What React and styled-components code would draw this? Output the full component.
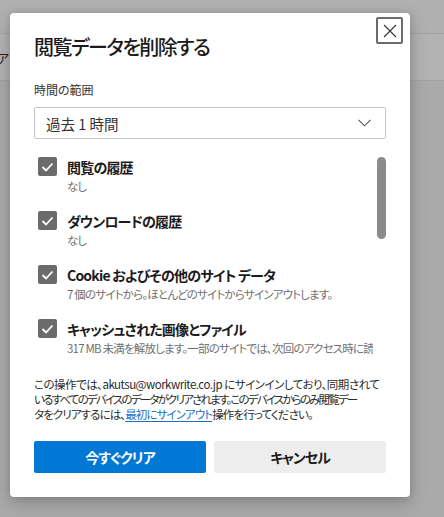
import React from "react";
import styled, { createGlobalStyle } from "styled-components";

const GlobalStyle = createGlobalStyle`
	html, body {
		margin: 0;
		padding: 0;
	}
	body {
		font-family: "Noto Sans CJK JP", "Noto Sans", sans-serif;
		font-feature-settings: "palt";
		color: #1b1b1b;
	}
`;

const Page = styled.div`
	position: relative;
	width: 444px;
	height: 517px;
	overflow: hidden;
	background: #aaaaaa;
`;
const TopStrip = styled.div`
	height: 33px;
	background: #b0b0b0;
`;
const BackBar = styled.div`
	height: 46px;
	display: flex;
	align-items: center;
	background: #b3b3b3;
	border-top: 1px solid #a3a3a3;
	border-bottom: 1px solid #a3a3a3;
	font-size: 13px;
	color: #222;
	margin-left: -3px;
`;

const Dialog = styled.div`
	position: absolute;
	left: 10px;
	top: 13px;
	width: 400px;
	height: 484px;
	box-sizing: border-box;
	background: #ffffff;
	border-radius: 4px;
	box-shadow: 0 6px 18px rgba(0, 0, 0, 0.22), 0 0 6px rgba(0, 0, 0, 0.1);
	padding: 20px 24px 24px 24px;
	display: flex;
	flex-direction: column;
`;
const Close = styled.button`
	position: absolute;
	top: 4px;
	right: 7px;
	width: 27px;
	height: 27px;
	box-sizing: border-box;
	border: 2px solid #6b6b6b;
	border-radius: 2px;
	background: #fff;
	padding: 0;
	display: flex;
	align-items: center;
	justify-content: center;
`;
const Title = styled.h1`
	margin: 0;
	font-size: 20px;
	line-height: 28px;
	font-weight: 500;
	letter-spacing: -1.5px;
	color: #1b1b1b;
`;
const FieldLabel = styled.div`
	margin-top: 20px;
	font-size: 12px;
	line-height: 18px;
	color: #333;
`;
const Select = styled.div`
	margin-top: 8px;
	height: 32px;
	box-sizing: border-box;
	border: 1px solid #c6c6c6;
	border-radius: 2px;
	display: flex;
	align-items: center;
	justify-content: space-between;
	padding: 0 14px 0 11px;
	font-size: 14.5px;
	color: #333;
`;
const ListArea = styled.div`
	margin-top: 6px;
	height: 210px;
	display: flex;
	overflow: hidden;
`;
const List = styled.div`
	flex: 1;
	min-width: 0;
	padding-top: 12px;
`;
const Track = styled.div`
	width: 9px;
	padding-top: 12px;
`;
const Thumb = styled.div`
	height: 82px;
	border-radius: 5px;
	background: #8a8a8a;
`;
const Item = styled.div`
	display: flex;
	align-items: flex-start;
	height: 54px;
	padding-left: 4px;
`;
const Box = styled.span`
	flex: none;
	width: 19px;
	height: 19px;
	border-radius: 2px;
	background: #6b6b6b;
	display: flex;
	align-items: center;
	justify-content: center;
`;
const ItemText = styled.div`
	margin-left: 10px;
	min-width: 0;
	flex: 1;
	padding-right: 4px;
`;
const ItemLabel = styled.div`
	font-size: 14px;
	line-height: 20px;
	font-weight: 700;
	letter-spacing: -0.8px;
	color: #1b1b1b;
	white-space: nowrap;
`;
const ItemSub = styled.div`
	font-size: 11.5px;
	line-height: 18px;
	letter-spacing: -0.8px;
	color: #707070;
	white-space: nowrap;
	overflow: hidden;
`;
const Note = styled.p`
	margin: 22px 0 0 0;
	font-size: 11.5px;
	line-height: 15px;
	color: #2b2b2b;
	white-space: nowrap;
`;
const NoteLine = styled.span`
	display: block;
	letter-spacing: ${(p) => p.$tight}px;
`;
const Link = styled.a`
	color: #1a6fc4;
	text-decoration: underline;
	text-underline-offset: 2px;
`;
const Buttons = styled.div`
	margin-top: auto;
	display: grid;
	grid-template-columns: 1fr 1fr;
	gap: 8px;
`;
const Button = styled.button`
	height: 32px;
	border: none;
	border-radius: 2px;
	font-family: inherit;
	font-feature-settings: "palt";
	font-size: 14px;
	font-weight: 700;
	letter-spacing: -1px;
	background: ${(p) => (p.$primary ? "#0078d4" : "#ededed")};
	color: ${(p) => (p.$primary ? "#ffffff" : "#1b1b1b")};
`;

const Check = () => (
	<svg width="13" height="10" viewBox="0 0 13 10">
		<polyline points="1.5,5 5,8.5 11.5,1.5" fill="none" stroke="#fff" strokeWidth="1.8" />
	</svg>
);

const items = [
	{ label: "閲覧の履歴", sub: "なし" },
	{ label: "ダウンロードの履歴", sub: "なし" },
	{ label: "Cookie およびその他のサイト データ", sub: "7 個のサイトから。ほとんどのサイトからサインアウトします。" },
	{ label: "キャッシュされた画像とファイル", sub: "317 MB 未満を解放します。一部のサイトでは、次回のアクセス時に読み込みが遅くなる可能性があります。" },
];

export default function App() {
	return (
		<Page>
			<GlobalStyle />
			<TopStrip />
			<BackBar>アカ</BackBar>
			<Dialog>
				<Close aria-label="閉じる">
					<svg width="14" height="14" viewBox="0 0 14 14">
						<path d="M1 1 L13 13 M13 1 L1 13" stroke="#333" strokeWidth="1.1" />
					</svg>
				</Close>
				<Title>閲覧データを削除する</Title>
				<FieldLabel>時間の範囲</FieldLabel>
				<Select>
					<span>過去 1 時間</span>
					<svg width="13" height="8" viewBox="0 0 13 8">
						<polyline points="0.5,0.8 6.5,6.8 12.5,0.8" fill="none" stroke="#555" strokeWidth="1.1" />
					</svg>
				</Select>
				<ListArea>
					<List>
						{items.map((it) => (
							<Item key={it.label}>
								<Box><Check /></Box>
								<ItemText>
									<ItemLabel>{it.label}</ItemLabel>
									<ItemSub>{it.sub}</ItemSub>
								</ItemText>
							</Item>
						))}
					</List>
					<Track><Thumb /></Track>
				</ListArea>
				<Note>
					<NoteLine $tight={-0.5}>この操作では、akutsu@workwrite.co.jp にサインインしており、同期されて</NoteLine>
					<NoteLine $tight={-1.8}>いるすべてのデバイスのデータがクリアされます。このデバイスからのみ閲覧デー</NoteLine>
					<NoteLine $tight={-0.9}>タをクリアするには、<Link href="#">最初にサインアウト</Link>操作を行ってください。</NoteLine>
				</Note>
				<Buttons>
					<Button $primary>今すぐクリア</Button>
					<Button>キャンセル</Button>
				</Buttons>
			</Dialog>
		</Page>
	);
}
